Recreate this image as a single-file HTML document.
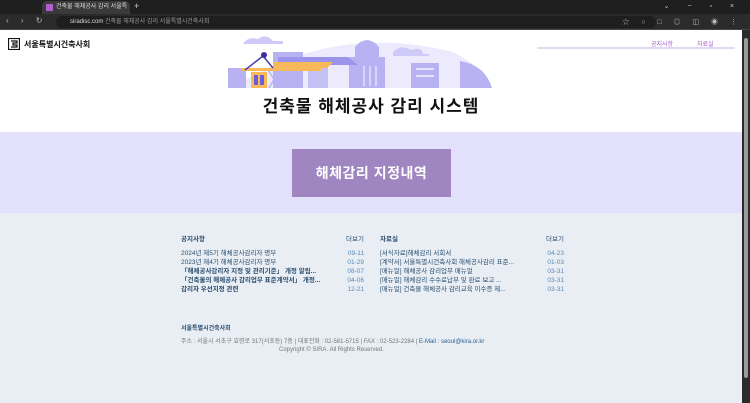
<!DOCTYPE html>
<html><head><meta charset="utf-8"><style>
*{margin:0;padding:0;box-sizing:border-box}
body{width:750px;height:403px;overflow:hidden;font-family:"Liberation Sans","Noto Sans CJK KR",sans-serif;background:#e8eef4;position:relative}
.tabs{position:absolute;left:0;top:0;width:750px;height:14px;background:#1f1f1f}
.tab{position:absolute;left:42px;top:1px;width:88px;height:13px;background:#3a3a3a;border-radius:5px 5px 0 0;color:#ddd;font-size:6px;line-height:13px;padding-left:14px}
.tab i{position:absolute;left:4px;top:3px;width:7px;height:7px;background:#b05ed0}
.addr{position:absolute;left:0;top:14px;width:750px;height:16px;background:#2b2b2b;border-bottom:1px solid #444}
.url{position:absolute;left:56px;top:2px;width:600px;height:12px;background:#1e1e1e;border-radius:6px;color:#999;font-size:6px;line-height:12px;padding-left:14px}
.url b{color:#ddd;font-weight:normal}
.page{position:absolute;left:0;top:30px;width:742px;height:373px}
.scroll{position:absolute;left:742px;top:30px;width:8px;height:373px;background:#2b2b2b}
.scroll i{position:absolute;left:2px;top:8px;width:4px;height:340px;background:#9a9a9a;border-radius:2px}
.top{position:absolute;left:0;top:0;width:742px;height:102px;background:#fff}
.band{position:absolute;left:0;top:102px;width:742px;height:81px;background:#e3e0fb}
.btn{position:absolute;left:292px;top:17px;width:159px;height:48px;background:#a086c0;color:#fff;font-size:14px;font-weight:bold;text-align:center;line-height:48px;letter-spacing:0.5px}
.logo{position:absolute;left:8px;top:8px;font-size:8px;font-weight:bold;color:#111;display:flex;align-items:center;gap:4px}
.nav{position:absolute;left:537px;top:8px;width:198px;height:11px;border-bottom:2px solid #e2d8f5;font-size:6px;color:#a05cc0}
h1{position:absolute;left:0;width:742px;top:62px;text-align:center;font-size:17px;font-weight:bold;color:#111;letter-spacing:1px}
.col{position:absolute;top:203px;font-size:6.5px;color:#2d4f70}
.col .h{display:flex;justify-content:space-between;margin-bottom:6px}
.col .h b{color:#2d4f70}
.row{display:flex;justify-content:space-between;height:9px;line-height:9px}
.row span:last-child{color:#5a8ab8}
.foot{position:absolute;left:181px;top:293px;font-size:6px;color:#777}
</style></head><body>
<div class="tabs"><div class="tab"><i></i>건축물 해체공사 감리 서울특별시</div><span style="position:absolute;left:134px;top:1px;color:#ccc;font-size:9px">+</span><span style="position:absolute;right:8px;top:2px;color:#ccc;font-size:7px;letter-spacing:8px">⌄ − ▫ ×</span></div>
<div class="addr"><span style="position:absolute;left:6px;top:2px;color:#bbb;font-size:8px;letter-spacing:5px">‹ › ↻</span><div class="url"><b>siradisc.com</b> 건축물 해체공사 감리 서울특별시건축사회</div><span style="position:absolute;right:8px;top:3px;color:#bbb;font-size:7px;letter-spacing:5px">☆ ○ □ ◎ ◫ ◉ ⋮</span></div>
<div class="page">
<div class="top">
<div class="logo"><svg width="12" height="12" viewBox="0 0 12 12"><rect x="0.5" y="0.5" width="11" height="11" fill="none" stroke="#111" stroke-width="1.2"/><path d="M3 3h6v2H5v2h4v2H3" fill="none" stroke="#111" stroke-width="1.2"/></svg>서울특별시건축사회</div>
<div class="nav"><span style="position:absolute;left:114px;top:1px">공지사항</span><span style="position:absolute;left:160px;top:1px">자료실</span></div>
<svg style="position:absolute;left:213px;top:2px" width="280" height="56" viewBox="0 0 280 56">
<path d="M20 56 Q120 -10 240 20 Q270 35 278 56Z" fill="#eceafc"/>
<path d="M30 12 q5-8 15-5 q8-6 15 2 h10 v3 h-40z" fill="#cfcaf7"/>
<path d="M180 20 q8-8 18-2 q10-4 12 4 h6 v2 h-36z" fill="#cfcaf7"/>
<rect x="15" y="36" width="18" height="20" fill="#b8b2f3"/>
<rect x="60" y="20" width="30" height="36" fill="#b8b2f3"/>
<rect x="95" y="30" width="20" height="26" fill="#c6c1f5"/>
<path d="M142 15 q12-14 24 0 v10 h6 v31 h-36 v-31 h6z" fill="#b8b2f3"/>
<rect x="150" y="34" width="2" height="20" fill="#d8d4fa"/><rect x="156" y="34" width="2" height="20" fill="#d8d4fa"/><rect x="162" y="34" width="2" height="20" fill="#d8d4fa"/>
<rect x="198" y="31" width="28" height="25" fill="#b8b2f3"/>
<rect x="203" y="36" width="18" height="2" fill="#e6e4fc"/><rect x="203" y="43" width="18" height="2" fill="#e6e4fc"/>
<path d="M247 29 q25 4 32 27 h-32z" fill="#b8b2f3"/>
<path d="M65 25 h70 l10 8 h-80z" fill="#9c94ea"/>
<path d="M28 36 h80 v3 h-80z" fill="#f8b95a"/>
<path d="M60 30 h60 l-6 6 h-54z" fill="#f8b95a"/>
<path d="M50 24 l-18 14 M50 24 l10 12" stroke="#4a3fb0" stroke-width="1.5"/>
<circle cx="51" cy="23" r="3" fill="#3a2f9f"/>
<rect x="38" y="40" width="16" height="16" fill="#f8b95a"/><rect x="41" y="43" width="4" height="10" fill="#6a5fd8"/><rect x="47" y="43" width="4" height="10" fill="#6a5fd8"/>
<path d="M56 39 l10 17 M66 39 l-10 17" stroke="#b8b2f3" stroke-width="1.5"/>
</svg>
<h1>건축물 해체공사 감리 시스템</h1>
</div>
<div class="band"><div class="btn">해체감리 지정내역</div></div>
<div class="col" style="left:181px;width:183px"><div class="h"><b>공지사항</b><span>더보기</span></div>
<div class="row"><span>2024년 제5기 해체공사감리자 명부</span><span>09-11</span></div>
<div class="row"><span>2023년 제4기 해체공사감리자 명부</span><span>01-29</span></div>
<div class="row"><b>「해체공사감리자 지정 및 관리기준」 개정 알림...</b><span>08-07</span></div>
<div class="row"><b>「건축물의 해체공사 감리업무 표준계약서」 개정...</b><span>04-06</span></div>
<div class="row"><b>감리자 우선지정 관련</b><span>12-21</span></div></div>
<div class="col" style="left:380px;width:184px"><div class="h"><b>자료실</b><span>더보기</span></div>
<div class="row"><span>[서식자료]해체감리 서회서</span><span>04-23</span></div>
<div class="row"><span>[계약서] 서울특별시건축사회 해체공사감리 표준...</span><span>01-03</span></div>
<div class="row"><span>[매뉴얼] 해체공사 감리업무 매뉴얼</span><span>03-31</span></div>
<div class="row"><span>[매뉴얼] 해체감리 수수료납부 및 완료 보고 ...</span><span>03-31</span></div>
<div class="row"><span>[매뉴얼] 건축물 해체공사 감리교육 이수증 제...</span><span>03-31</span></div></div>
<div class="foot"><div style="color:#2d4f70;font-weight:bold;margin-bottom:4px">서울특별시건축사회</div>
<div>주소 : 서울시 서초구 효령로 317(서초동) 7층 | 대표전화 : 02-581-5715 | FAX : 02-523-2284 | <span style="color:#2d5f90">E-Mail : seoul@kira.or.kr</span></div>
<div style="margin-left:98px;margin-top:2px">Copyright © SIRA. All Rights Reserved.</div></div>
</div>
<div class="scroll"><i></i></div>
</body></html>
